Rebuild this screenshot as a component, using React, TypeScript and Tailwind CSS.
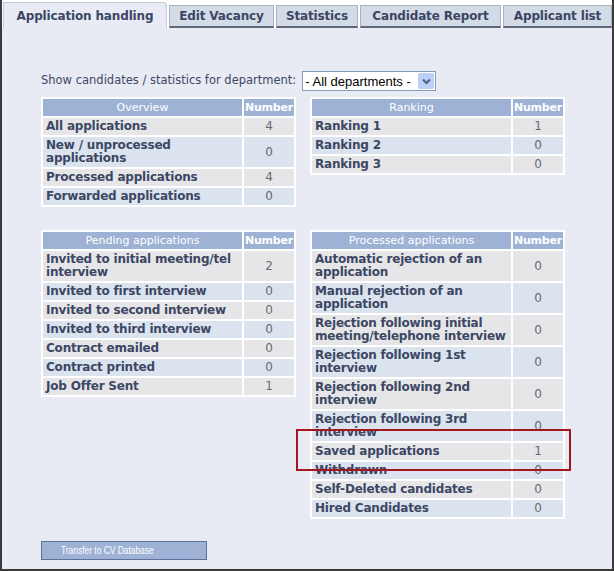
type Row = { label: string; value: string }

const overview: Row[] = [
  { label: 'All applications', value: '4' },
  { label: 'New / unprocessed applications', value: '0' },
  { label: 'Processed applications', value: '4' },
  { label: 'Forwarded applications', value: '0' },
]

const ranking: Row[] = [
  { label: 'Ranking 1', value: '1' },
  { label: 'Ranking 2', value: '0' },
  { label: 'Ranking 3', value: '0' },
]

const pending: Row[] = [
  { label: 'Invited to initial meeting/tel interview', value: '2' },
  { label: 'Invited to first interview', value: '0' },
  { label: 'Invited to second interview', value: '0' },
  { label: 'Invited to third interview', value: '0' },
  { label: 'Contract emailed', value: '0' },
  { label: 'Contract printed', value: '0' },
  { label: 'Job Offer Sent', value: '1' },
]

const processed: Row[] = [
  { label: 'Automatic rejection of an application', value: '0' },
  { label: 'Manual rejection of an application', value: '0' },
  { label: 'Rejection following initial meeting/telephone interview', value: '0' },
  { label: 'Rejection following 1st interview', value: '0' },
  { label: 'Rejection following 2nd interview', value: '0' },
  { label: 'Rejection following 3rd interview', value: '0' },
  { label: 'Saved applications', value: '1' },
  { label: 'Withdrawn', value: '0' },
  { label: 'Self-Deleted candidates', value: '0' },
  { label: 'Hired Candidates', value: '0' },
]

const tabs = [
  { name: 'Edit Vacancy', w: 'w-[105px]' },
  { name: 'Statistics', w: 'w-[82px]' },
  { name: 'Candidate Report', w: 'w-[141px]' },
  { name: 'Applicant list', w: 'flex-1' },
]

function StatTable({ title, rows }: { title: string; rows: Row[] }) {
  return (
    <table className="w-[255px] table-fixed border-separate border-spacing-[2px] bg-white">
      <colgroup>
        <col className="w-[199px]" />
        <col className="w-[50px]" />
      </colgroup>
      <thead>
        <tr>
          <th className="h-[17px] bg-[#9db2d5] p-0 text-[11px] font-normal leading-[13px] text-white">
            {title}
          </th>
          <th className="h-[17px] bg-[#9db2d5] p-0 text-[11px] font-bold leading-[13px] tracking-[-0.2px] text-white">
            Number
          </th>
        </tr>
      </thead>
      <tbody>
        {rows.map((r, i) => {
          const bg = i % 2 === 0 ? 'bg-[#e6e6e8]' : 'bg-[#dbe3ee]'
          return (
            <tr key={r.label}>
              <td className={`${bg} h-[17px] px-[3px] py-[2px] text-left align-middle text-[12px] font-bold leading-[13px] tracking-[-0.2px] text-[#3c4764]`}>
                {r.label}
              </td>
              <td className={`${bg} h-[17px] p-0 text-center align-middle text-[12px] leading-[13px] text-[#666a70]`}>
                {r.value}
              </td>
            </tr>
          )
        })}
      </tbody>
    </table>
  )
}

export default function App() {
  return (
    <div className="relative h-[571px] w-[614px] bg-white font-['DejaVu_Sans',Verdana,sans-serif]">
      <div className="flex h-full flex-col border-x-2 border-b-2 border-[#3a3a3a] bg-[#e8ebf3]">
        {/* tabs */}
        <div className="flex h-[28px] items-end gap-[2px] bg-white pl-[1px] pt-[2px]">
          <div className="flex h-[26px] w-[164px] items-center justify-center rounded-tr-[4px] border-x border-t border-[#c3cad8] bg-[#e8ebf3] text-[12px] font-bold tracking-[-0.15px] text-[#3b4663]">
            Application handling
          </div>
          {tabs.map((t) => (
            <div
              key={t.name}
              className={`${t.w} flex h-[23px] items-center justify-center border-x border-t border-[#aab3c4] border-b-2 border-b-[#5f6779] bg-[#d3dbe7] text-[12px] font-bold tracking-[-0.15px] text-[#3b4663]`}
            >
              {t.name}
            </div>
          ))}
        </div>

        {/* content */}
        <div className="flex flex-col pl-[39px] pt-[43px]">
          <div className="flex h-[20px] items-center gap-[6px]">
            <span className="text-[11.5px] text-[#3c4764]">Show candidates / statistics for department:</span>
            <div className="flex h-[20px] w-[134px] items-center border border-[#7f9db9] bg-white">
              <span className="flex-1 pl-[2px] font-['Liberation_Sans',Arial,sans-serif] text-[13px] leading-none text-black">
                - All departments -
              </span>
              <span className="mr-[1px] flex h-[16px] w-[16px] items-center justify-center rounded-[2px] bg-[#bccff7]">
                <svg width="9" height="7" viewBox="0 0 9 7" fill="none">
                  <path d="M1 1.5 4.5 5 8 1.5" stroke="#4d5f86" strokeWidth="2" />
                </svg>
              </span>
            </div>
          </div>

          <div className="mt-[6px] grid grid-cols-[255px_255px] items-start gap-x-[14px] gap-y-[23px]">
            <StatTable title="Overview" rows={overview} />
            <StatTable title="Ranking" rows={ranking} />
            <StatTable title="Pending applications" rows={pending} />
            <StatTable title="Processed applications" rows={processed} />
          </div>

          <button className="mt-[22px] flex h-[19px] w-[166px] items-center border border-[#5f719a] bg-[#9db2d5] pl-[19px] font-['Liberation_Sans',Arial,sans-serif] text-[10.5px] text-white">
            <span className="inline-block origin-left scale-x-[0.8] whitespace-nowrap">Transfer to CV Database</span>
          </button>
        </div>
      </div>

      {/* highlight */}
      <div className="absolute left-[296px] top-[429px] h-[42px] w-[275px] border-2 border-[#a3181f]" />
    </div>
  )
}
